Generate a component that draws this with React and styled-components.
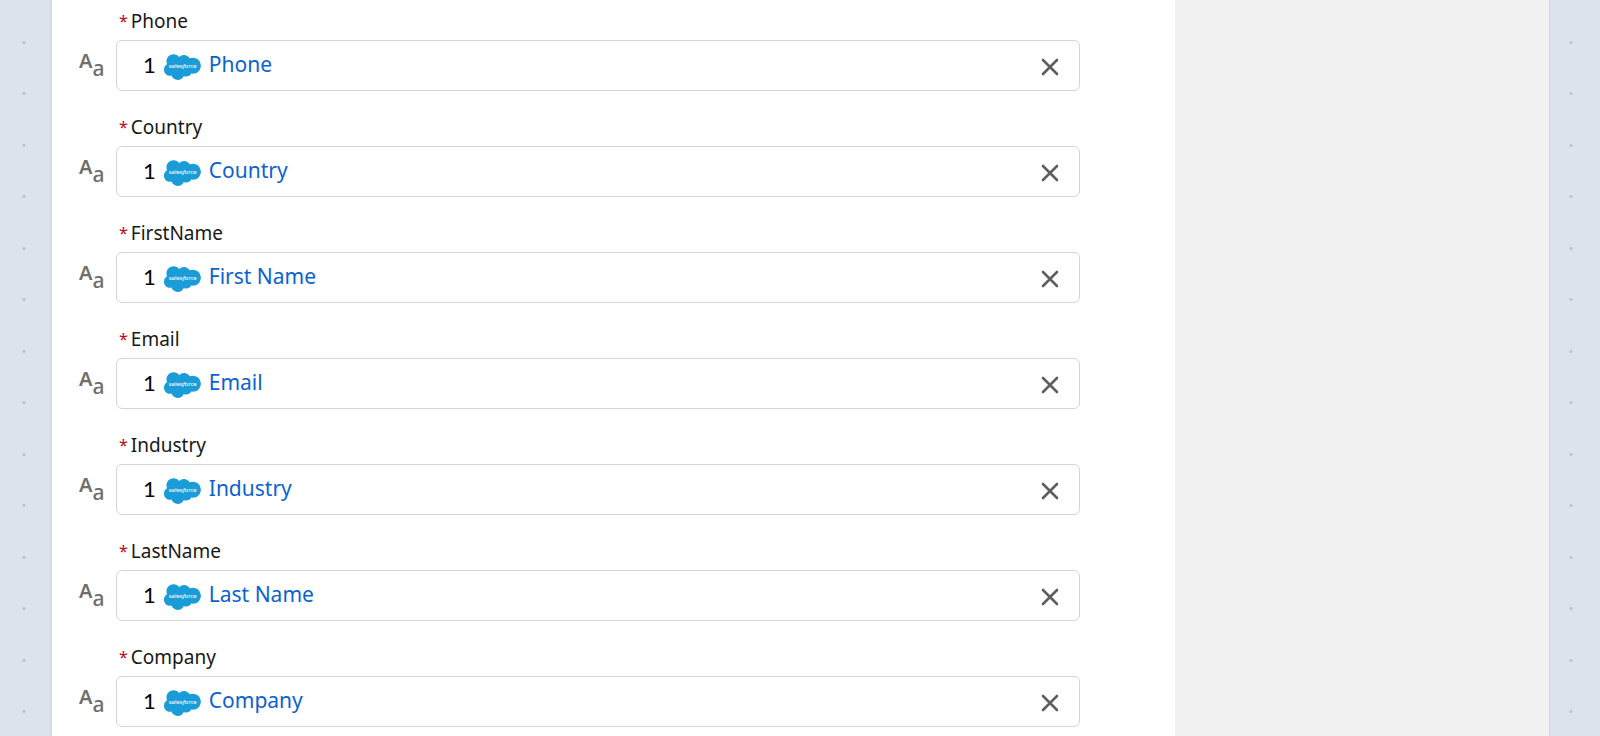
import React from 'react'
import styled, { createGlobalStyle } from 'styled-components'

const fields = [
  { label: 'Phone', value: 'Phone' },
  { label: 'Country', value: 'Country' },
  { label: 'FirstName', value: 'First Name' },
  { label: 'Email', value: 'Email' },
  { label: 'Industry', value: 'Industry' },
  { label: 'LastName', value: 'Last Name' },
  { label: 'Company', value: 'Company' },
]

const GlobalStyle = createGlobalStyle`
  * {
    box-sizing: border-box;
  }
  body {
    margin: 0;
    font-family: 'Noto Sans', 'Open Sans', sans-serif;
    color: #181818;
    background: #dce3ed;
  }
`

const Canvas = styled.div`
  display: flex;
  min-height: 100vh;
`

const Gutter = styled.div`
  flex: 0 0 50px;
  background-image: radial-gradient(circle, #b9c2d0 1px, transparent 2px),
    radial-gradient(circle, #b9c2d0 1px, transparent 2px);
  background-size: 6px 103px;
  background-position: ${({ $dotX }) => `${$dotX}px -9px, ${$dotX}px 42px`};
  background-repeat: repeat-y;
`

const Panel = styled.main`
  display: grid;
  flex: 1;
  grid-template-columns: 3fr 1fr;
  border-left: 2px solid #d6d9df;
  border-right: 1px solid #d6d6d4;
`

const FieldList = styled.form`
  display: flex;
  flex-direction: column;
  gap: 24px;
  padding: 9px 95px 8px 27px;
  background: white;
`

const Sidebar = styled.aside`
  background: #f1f1f1;
`

const FieldRow = styled.div`
  display: grid;
  grid-template-columns: 37px 1fr;
`

const FieldLabel = styled.div`
  grid-column: 2;
  display: flex;
  gap: 3px;
  height: 31px;
  padding-left: 3px;
  font-size: 19px;
  line-height: 24px;
`

const Required = styled.abbr`
  font-size: 16px;
  color: #ba0517;
  text-decoration: none;
`

const TypeIcon = styled.div`
  display: flex;
  align-items: flex-start;
  padding-top: 9px;
  line-height: 24px;
  color: #706e6b;
`

const UpperLetter = styled.span`
  font-size: 20px;
  font-weight: 600;
`

const LowerLetter = styled.span`
  padding-top: 7px;
  font-size: 21px;
  font-weight: 500;
`

const ValueBox = styled.div`
  display: flex;
  align-items: center;
  height: 51px;
  padding: 0 19px 0 26px;
  border: 1px solid #d4d4d4;
  border-radius: 6px;
  background: white;
  font-size: 21px;
  line-height: 28px;
`

const Step = styled.span`
  padding-bottom: 2px;
  font-family: Lato, 'Noto Sans', sans-serif;
  font-size: 22px;
  color: #080707;
`

const Logo = styled.svg`
  width: 37px;
  height: 26px;
  margin: 3px 8px 0 8px;
`

const Value = styled.span`
  flex: 1;
  padding-bottom: 3px;
  color: #0b62cf;
`

const RemoveButton = styled.button`
  display: flex;
  padding: 2px 0 0;
  border: 0;
  background: none;
  color: #5f5e5c;
  cursor: pointer;
`

const SalesforceLogo = () => (
  <Logo viewBox="0 0 273 191" role="img" aria-label="Salesforce">
    <path
      fill="#1a9cd8"
      d="M113 21.3c8.78-9.14 21-14.8 34.5-14.8 18 0 33.6 10 42 24.9a58 58 0 0 1 23.7-5.05c32.4 0 58.7 26.5 58.7 59.2s-26.3 59.2-58.7 59.2c-3.96 0-7.82-.398-11.6-1.15-7.35 13.1-21.4 22-37.4 22a42.7 42.7 0 0 1-18.8-4.32c-7.45 17.5-24.8 29.8-45 29.8-21.1 0-39-13.3-45.9-32a45.1 45.1 0 0 1-9.34.972c-25.1 0-45.4-20.6-45.4-45.9 0-17 9.14-31.8 22.7-39.8a52.6 52.6 0 0 1-4.35-21c0-29.2 23.7-52.8 52.9-52.8 17.1 0 32.4 8.15 42 20.8"
    />
    <text
      x="138"
      y="104"
      textAnchor="middle"
      fill="white"
      fontSize="43"
      fontWeight="500"
    >
      sales
      <tspan fontStyle="italic">f</tspan>
      orce
    </text>
  </Logo>
)

const CloseIcon = () => (
  <svg width="20" height="20" viewBox="0 0 20 20" aria-hidden="true">
    <path
      d="M3 3l14 14M17 3L3 17"
      stroke="currentColor"
      strokeWidth="2.6"
      strokeLinecap="round"
    />
  </svg>
)

const MappedField = ({ label, value }) => (
  <FieldRow>
    <FieldLabel>
      <Required title="required">*</Required>
      <span id={`${label}-label`}>{label}</span>
    </FieldLabel>
    <TypeIcon aria-hidden="true">
      <UpperLetter>A</UpperLetter>
      <LowerLetter>a</LowerLetter>
    </TypeIcon>
    <ValueBox role="group" aria-labelledby={`${label}-label`}>
      <Step>1</Step>
      <SalesforceLogo />
      <Value>{value}</Value>
      <RemoveButton type="button" aria-label={`Remove ${value}`}>
        <CloseIcon />
      </RemoveButton>
    </ValueBox>
  </FieldRow>
)

const App = () => (
  <>
    <GlobalStyle />
    <Canvas>
      <Gutter $dotX={21} />
      <Panel>
        <FieldList>
          {fields.map(field => (
            <MappedField key={field.label} {...field} />
          ))}
        </FieldList>
        <Sidebar />
      </Panel>
      <Gutter $dotX={18} />
    </Canvas>
  </>
)

export default App
